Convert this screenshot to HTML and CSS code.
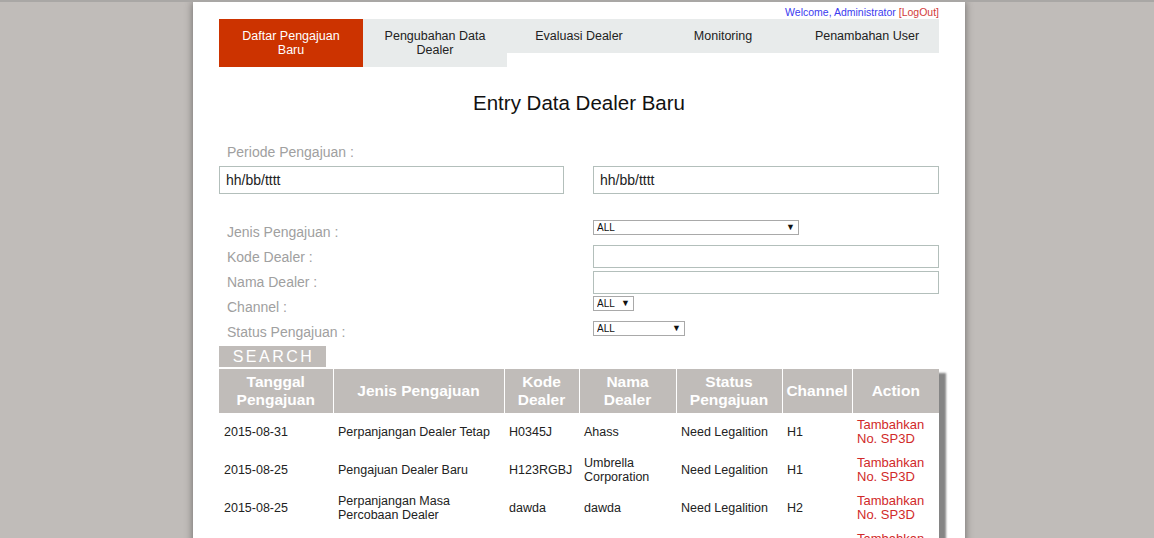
FILE: index.html
```html
<!DOCTYPE html>
<html lang="id">
<head>
<meta charset="utf-8">
<title>Entry Data Dealer Baru</title>
<link rel="stylesheet" href="styles.css">
</head>
<body>
<div class="page">
  <div class="welcome"><span class="user">Welcome, Administrator</span> <a class="logout" href="#">[LogOut]</a></div>
  <nav class="tabs">
    <a class="tab active" href="#">Daftar Pengajuan Baru</a>
    <a class="tab" href="#">Pengubahan Data Dealer</a>
    <a class="tab" href="#">Evaluasi Dealer</a>
    <a class="tab" href="#">Monitoring</a>
    <a class="tab" href="#">Penambahan User</a>
  </nav>

  <h1 class="title">Entry Data Dealer Baru</h1>

  <div class="label periode">Periode Pengajuan :</div>
  <div class="dates">
    <input class="date" type="text" value="hh/bb/tttt">
    <input class="date" type="text" value="hh/bb/tttt">
  </div>

  <div class="filters">
    <div class="label">Jenis Pengajuan :</div>
    <div class="ctl m1"><span class="sel w-jenis"><select><option>ALL</option></select><span class="arrow">&#9660;</span></span></div>
    <div class="label">Kode Dealer :</div>
    <div class="ctl m1"><input class="text" type="text"></div>
    <div class="label">Nama Dealer :</div>
    <div class="ctl m2"><input class="text" type="text"></div>
    <div class="label">Channel :</div>
    <div class="ctl m2"><span class="sel w-channel"><select><option>ALL</option></select><span class="arrow">&#9660;</span></span></div>
    <div class="label">Status Pengajuan :</div>
    <div class="ctl m2"><span class="sel w-status"><select><option>ALL</option></select><span class="arrow">&#9660;</span></span></div>
  </div>

  <button class="search" type="button">SEARCH</button>

  <table class="grid">
    <thead>
      <tr>
        <th class="c1">Tanggal Pengajuan</th>
        <th class="c2">Jenis Pengajuan</th>
        <th class="c3">Kode Dealer</th>
        <th class="c4">Nama Dealer</th>
        <th class="c5">Status Pengajuan</th>
        <th class="c6">Channel</th>
        <th class="c7">Action</th>
      </tr>
    </thead>
    <tbody>
      <tr>
        <td>2015-08-31</td><td>Perpanjangan Dealer Tetap</td><td>H0345J</td><td>Ahass</td><td>Need Legalition</td><td>H1</td><td><a class="act" href="#">Tambahkan No. SP3D</a></td>
      </tr>
      <tr>
        <td>2015-08-25</td><td>Pengajuan Dealer Baru</td><td>H123RGBJ</td><td>Umbrella Corporation</td><td>Need Legalition</td><td>H1</td><td><a class="act" href="#">Tambahkan No. SP3D</a></td>
      </tr>
      <tr>
        <td>2015-08-25</td><td>Perpanjangan Masa Percobaan Dealer</td><td>dawda</td><td>dawda</td><td>Need Legalition</td><td>H2</td><td><a class="act" href="#">Tambahkan No. SP3D</a></td>
      </tr>
      <tr>
        <td></td><td></td><td></td><td></td><td></td><td></td><td><a class="act" href="#">Tambahkan No. SP3D</a></td>
      </tr>
    </tbody>
  </table>
</div>
</body>
</html>
```

FILE: styles.css
```css
* { box-sizing: border-box; }

html, body {
  margin: 0;
  height: 100%;
  overflow: hidden;
}

body {
  background: #c0bcb9;
  border-top: 2px solid #a9a7a5;
  font-family: "Liberation Sans", Arial, sans-serif;
  color: #222;
}

.page {
  width: 772px;
  min-height: 100%;
  margin-left: calc(50% - 384px);
  background: #fff;
  padding: 3px 26px 0 26px;
  box-shadow: 0 0 8px rgba(0, 0, 0, 0.45);
}

.welcome {
  text-align: right;
  font-size: 10.5px;
  line-height: 14px;
}
.welcome .user { color: #3b3bf0; }
.welcome .logout { color: #d23a3a; text-decoration: none; }

.tabs {
  display: flex;
  align-items: flex-start;
}
.tab {
  width: 144px;
  padding: 10px 12px;
  background: #e8ebeb;
  color: #222;
  font-size: 12.5px;
  line-height: 14px;
  text-align: center;
  text-decoration: none;
}
.tab.active {
  background: #cc3300;
  color: #fff;
}

.title {
  margin: 24px 0 0 0;
  text-align: center;
  font-size: 20.5px;
  font-weight: normal;
  line-height: 24px;
  color: #111;
}

.label {
  color: #a0a0a0;
  font-size: 14px;
  padding-left: 8px;
}
.periode {
  margin-top: 29px;
  line-height: 16px;
}

.dates {
  display: grid;
  grid-template-columns: 345px 346px;
  justify-content: space-between;
  margin-top: 6px;
}
.date {
  height: 28px;
  border: 1px solid #b3bfbb;
  padding: 0 6px;
  font-family: "Liberation Sans", Arial, sans-serif;
  font-size: 14px;
  color: #222;
  outline: none;
}

.filters {
  display: grid;
  grid-template-columns: 374px 346px;
  grid-auto-rows: 25px;
  margin-top: 25px;
}
.filters .label { line-height: 25px; padding-top: 1px; }
.ctl.m1 { padding-top: 1px; }
.ctl.m2 { padding-top: 2px; }

.text {
  display: block;
  width: 346px;
  height: 23px;
  border: 1px solid #b3bfbb;
  outline: none;
}

.sel {
  position: relative;
  display: block;
  height: 15px;
}
.sel select {
  appearance: none;
  -webkit-appearance: none;
  display: block;
  width: 100%;
  height: 15px;
  margin: 0;
  padding: 0 0 0 3px;
  border: 1px solid #a9a9a9;
  border-radius: 0;
  background: #fff;
  font-family: "Liberation Sans", Arial, sans-serif;
  font-size: 10px;
  line-height: 13px;
  color: #111;
}
.sel .arrow {
  position: absolute;
  right: 4px;
  top: 1px;
  font-size: 9px;
  line-height: 13px;
  color: #111;
  pointer-events: none;
}
.w-jenis { width: 206px; }
.w-channel { width: 41px; }
.w-status { width: 92px; }

.search {
  display: block;
  margin-top: 2px;
  width: 107px;
  height: 21px;
  padding: 0 0 0 2px;
  border: 0;
  background: #c0bcb9;
  color: #fff;
  font-family: "Liberation Sans", Arial, sans-serif;
  font-size: 16px;
  letter-spacing: 2.5px;
  line-height: 21px;
  text-align: center;
}

.grid {
  margin-top: 2px;
  width: 720px;
  table-layout: fixed;
  border-collapse: collapse;
  box-shadow: 7px 4px 2px #858585;
  background: #fff;
}
.grid th {
  background: #c0bcb9;
  color: #fff;
  font-size: 15.5px;
  font-weight: bold;
  line-height: 18px;
  padding: 4px 2px;
  height: 44px;
  text-align: center;
  vertical-align: middle;
  border-left: 1px solid #fff;
  border-right: 1px solid #fff;
}
.grid th.c1 { width: 114px; border-left: 0; }
.grid th.c2 { width: 171px; }
.grid th.c3 { width: 75px; }
.grid th.c4 { width: 97px; }
.grid th.c5 { width: 106px; }
.grid th.c6 { width: 70px; }
.grid th.c7 { width: 87px; border-right: 0; }

.grid tbody tr { height: 38px; }
.grid td {
  padding: 0 2px 0 5px;
  font-size: 12.5px;
  line-height: 14px;
  color: #222;
  vertical-align: middle;
}
.act {
  color: #d12a2a;
  text-decoration: none;
  font-size: 13px;
}
```
